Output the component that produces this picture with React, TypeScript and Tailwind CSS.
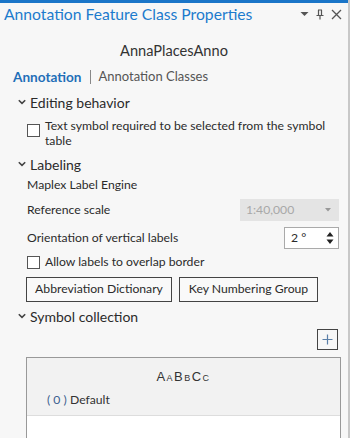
import React from 'react';

const Chevron = () => (
  <svg width="8" height="6" viewBox="0 0 8 6" className="shrink-0">
    <path d="M0.8 1.2 L4 4.4 L7.2 1.2" fill="none" stroke="#444" strokeWidth="1.6" />
  </svg>
);

const CheckBox = () => (
  <span className="w-[13px] h-[13px] shrink-0 border border-[#555] bg-white" />
);

const Section = ({ title, className = '' }: { title: string; className?: string }) => (
  <div className={`flex items-center gap-[4px] pl-[18px] h-[20px] text-[14px] text-[#2b2b2b] ${className}`}>
    <Chevron />
    <span>{title}</span>
  </div>
);

export default function App() {
  return (
    <div
      className="w-[350px] h-[438px] overflow-hidden bg-[#f7f7f7] border-r-2 border-[#c8c8c8] flex flex-col text-[#2b2b2b]"
      style={{ fontFamily: 'Lato, "Noto Sans", sans-serif' }}
    >
      <div className="h-[3px] bg-[#1a75c8] shrink-0" />

      {/* title bar */}
      <div className="flex items-center justify-between pl-[4px] pr-[6px] h-[22px] shrink-0">
        <span className="text-[15.7px] text-[#1c7bcd] leading-[22px]">
          Annotation Feature Class Properties
        </span>
        <div className="flex items-center gap-[7px] text-[#555]">
          <svg width="9" height="6" viewBox="0 0 9 6">
            <path d="M0.5 1 H8.5 L4.5 5 Z" fill="#555" />
          </svg>
          <svg width="8" height="11" viewBox="0 0 8 11">
            <path d="M2 1 H6 M2.5 1 V6 M5.5 1 V6 M0.5 6.5 H7.5 M4 6.5 V10.5" fill="none" stroke="#555" strokeWidth="1.2" />
          </svg>
          <svg width="11" height="11" viewBox="0 0 11 11">
            <path d="M1 1 L10 10 M10 1 L1 10" stroke="#555" strokeWidth="1.3" />
          </svg>
        </div>
      </div>

      <div className="text-center text-[14.6px] text-[#333] mt-[16px] leading-[20px] shrink-0">AnnaPlacesAnno</div>

      {/* tabs */}
      <div className="flex items-center pl-[13px] mt-[6px] h-[20px] shrink-0">
        <span className="font-bold text-[13.6px] text-[#1f6fb8]">Annotation</span>
        <span className="w-px h-[14px] bg-[#888] mx-[8px]" />
        <span className="text-[13px] text-[#555]">Annotation Classes</span>
      </div>

      <Section title="Editing behavior" className="mt-[5px] shrink-0" />
      <div className="flex items-start gap-[5px] pl-[27px] pr-[8px] mt-[6px] text-[12.2px] leading-[15px] shrink-0">
        <span className="mt-[6px] flex"><CheckBox /></span>
        <span>Text symbol required to be selected from the symbol table</span>
      </div>

      <Section title="Labeling" className="mt-[6px] shrink-0" />

      <div className="pl-[27px] pr-[9px] text-[12.2px] flex flex-col shrink-0">
        <div className="mt-[2px] leading-[18px]">Maplex Label Engine</div>
        <div className="flex items-center justify-between mt-[5px] h-[22px]">
          <span>Reference scale</span>
          <div className="w-[99px] h-[22px] bg-[#e4e4e4] flex items-center justify-between pl-[6px] pr-[8px] text-[#a8a8a8]">
            <span>1:40,000</span>
            <svg width="6" height="4" viewBox="0 0 6 4">
              <path d="M0 0 H6 L3 3.5 Z" fill="#999" />
            </svg>
          </div>
        </div>
        <div className="flex items-center justify-between mt-[6px] h-[22px]">
          <span>Orientation of vertical labels</span>
          <div className="w-[55px] h-[22px] bg-white border border-[#aaa] flex items-center justify-between pl-[6px] pr-[4px]">
            <span>2 °</span>
            <svg width="8" height="14" viewBox="0 0 8 14">
              <path d="M0.5 5.5 L4 1 L7.5 5.5 Z M0.5 8.5 L4 13 L7.5 8.5 Z" fill="#222" />
            </svg>
          </div>
        </div>
        <div className="flex items-center gap-[5px] mt-[4px] h-[18px]">
          <CheckBox />
          <span>Allow labels to overlap border</span>
        </div>
        <div className="flex gap-[7px] mt-[6px] -ml-[1px]">
          <button className="h-[25px] w-[146px] whitespace-nowrap border border-[#444] bg-[#f9f9f9] text-[12.2px] text-[#2b2b2b]">
            Abbreviation Dictionary
          </button>
          <button className="h-[25px] w-[139px] whitespace-nowrap border border-[#444] bg-[#f9f9f9] text-[12.2px] text-[#2b2b2b]">
            Key Numbering Group
          </button>
        </div>
      </div>

      <Section title="Symbol collection" className="mt-[4px] shrink-0" />

      <div className="flex justify-end pr-[10px] mt-[3px] shrink-0">
        <div className="w-[21px] h-[21px] border border-[#444] flex items-center justify-center">
          <svg width="11" height="11" viewBox="0 0 11 11">
            <path d="M5.5 0.5 V10.5 M0.5 5.5 H10.5" stroke="#5a7fa8" strokeWidth="1.2" />
          </svg>
        </div>
      </div>

      <div className="ml-[26px] mr-[7px] mt-[7px] border-x border-t border-[#999] flex-1 bg-white flex flex-col">
        <div className="bg-[#f2f2f2] h-[58px] border-b border-[#ddd] flex flex-col shrink-0">
          <div
            className="text-center text-[13px] mt-[10px] leading-[18px] tracking-[1.5px] text-[#333]"
            style={{ fontVariant: 'small-caps', fontFamily: '"Liberation Sans", sans-serif' }}
          >
            AaBbCc
          </div>
          <div className="pl-[20px] mt-[6px] text-[12.2px] leading-[16px]">
            <span className="text-[#3d5f8f]">( 0 )</span> <span className="text-[#333]">Default</span>
          </div>
        </div>
      </div>
    </div>
  );
}
